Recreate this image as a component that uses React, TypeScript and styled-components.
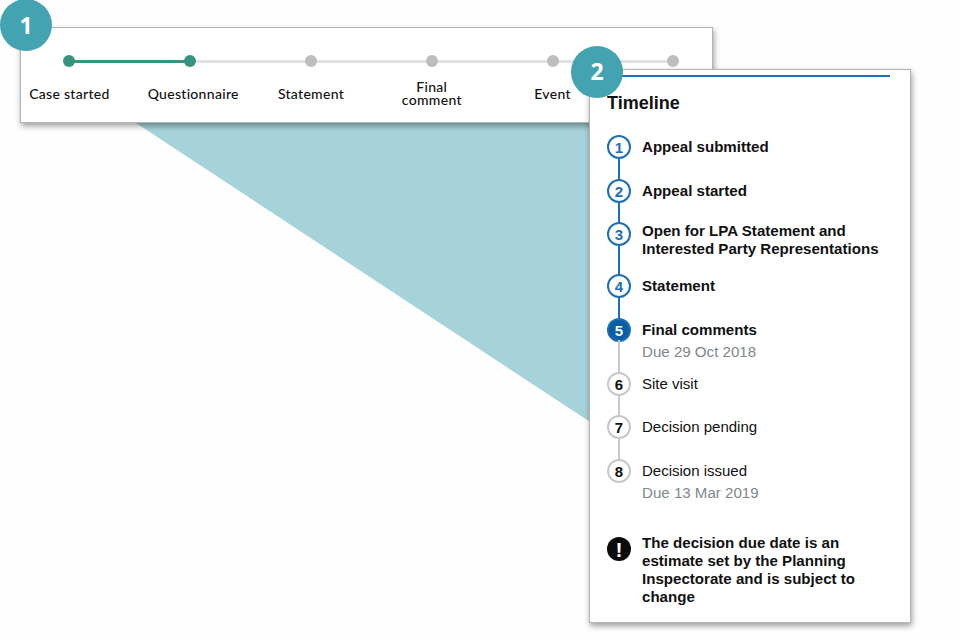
// App.tsx - annotated close-up of the appeal progress bar and timeline

import React from 'react';
import styled, { createGlobalStyle } from 'styled-components';

const GlobalStyle = createGlobalStyle`
  html, body {
    margin: 0;
    padding: 0;
    background: #fefefe;
  }
`;

const Canvas = styled.div`
  position: relative;
  width: 960px;
  height: 640px;
  overflow: hidden;
  background: #fefefe;
  font-family: "Liberation Sans", Arial, sans-serif;
  color: #111;
`;

const Wedge = styled.svg`
  position: absolute;
  left: 0;
  top: 0;
`;

const Card = styled.section`
  position: absolute;
  box-sizing: border-box;
  background: #fff;
  border: 1px solid #b4b4b4;
  box-shadow: 1px 3px 6px rgba(0, 0, 0, 0.38);
`;

const ProgressCard = styled(Card)`
  left: 20px;
  top: 27px;
  width: 693px;
  height: 96px;
`;

const TimelineCard = styled(Card)`
  left: 589px;
  top: 69px;
  width: 322px;
  height: 554px;
  padding: 5px 20px 0 17px;
`;

const Badge = styled.div<{ $left: number; $top: number }>`
  position: absolute;
  left: ${p => p.$left}px;
  top: ${p => p.$top}px;
  width: 52px;
  height: 52px;
  border-radius: 50%;
  background: #43a3b0;
  color: #fff;
  display: flex;
  align-items: center;
  justify-content: center;
  font-family: "Open Sans", sans-serif;
  font-weight: 700;
  font-size: 23px;
  line-height: 1;
`;

const Steps = styled.ol`
  list-style: none;
  margin: 0 0 0 -12px;
  padding: 0;
  display: grid;
  grid-template-columns: repeat(6, 120.8px);
`;

const Step = styled.li`
  display: flex;
  flex-direction: column;
  align-items: center;
  padding-top: 27px;
`;

const DotWrap = styled.div<{ $line?: string }>`
  position: relative;
  width: 100%;
  height: 13px;
  display: flex;
  justify-content: center;

  &::after {
    content: ${p => (p.$line ? '""' : 'none')};
    position: absolute;
    left: 50%;
    top: 5px;
    width: 100%;
    height: 3px;
    background: ${p => p.$line};
  }
`;

const Dot = styled.span<{ $done: boolean }>`
  position: relative;
  z-index: 1;
  width: 12px;
  height: 12px;
  border-radius: 50%;
  background: ${p => (p.$done ? '#35937f' : '#bdbdbd')};
`;

const StepLabel = styled.div<{ $shift?: number }>`
  height: 38px;
  margin-top: 6px;
  margin-left: ${p => (p.$shift ? p.$shift * 2 : 0)}px;
  display: flex;
  align-items: center;
  text-align: center;
  font-family: Lato, sans-serif;
  font-weight: 500;
  font-size: 14px;
  line-height: 13px;
  letter-spacing: 0.3px;
  color: #111;
`;

const TimelineHeader = styled.h2`
  margin: 0;
  padding: 16px 0 0;
  height: 42px;
  border-top: 2px solid #1d6fb5;
  font-size: 18px;
  line-height: 21px;
  font-weight: 700;
  box-sizing: content-box;
`;

const Rows = styled.ol`
  list-style: none;
  margin: 0;
  padding: 0;
`;

const Row = styled.li<{ $height: number; $line?: string }>`
  position: relative;
  display: flex;
  align-items: flex-start;
  gap: 11px;
  min-height: ${p => p.$height}px;

  &::after {
    content: ${p => (p.$line ? '""' : 'none')};
    position: absolute;
    left: 11px;
    top: 22px;
    width: 2px;
    height: ${p => p.$height - 20}px;
    background: ${p => p.$line};
  }
`;

const Marker = styled.span<{ $state: 'done' | 'current' | 'todo' }>`
  flex: none;
  box-sizing: border-box;
  width: 24px;
  height: 24px;
  border-radius: 50%;
  border: 2px solid ${p => (p.$state === 'todo' ? '#c6c8c9' : '#1d6fb5')};
  background: ${p => (p.$state === 'current' ? '#0b5ea6' : '#fff')};
  color: ${p => (p.$state === 'current' ? '#fff' : p.$state === 'done' ? '#1d6fb5' : '#111')};
  display: flex;
  align-items: center;
  justify-content: center;
  font-size: 15px;
  font-weight: 700;
  line-height: 1;
`;

const RowText = styled.div<{ $tight?: boolean }>`
  padding-top: ${p => (p.$tight ? 0 : 3)}px;
`;

const RowTitle = styled.div<{ $bold: boolean }>`
  font-size: ${p => (p.$bold ? 15.1 : 15)}px;
  line-height: 18px;
  font-weight: ${p => (p.$bold ? 700 : 400)};
  color: #111;
`;

const RowDue = styled.div`
  margin-top: 4px;
  font-size: 15.1px;
  line-height: 18px;
  color: #7e878b;
`;

const Notice = styled.div`
  display: flex;
  align-items: flex-start;
  gap: 11px;
  margin-top: 21px;
`;

const NoticeIcon = styled.span`
  flex: none;
  width: 24px;
  height: 24px;
  margin-top: 3px;
  border-radius: 50%;
  background: #0b0b0b;
  color: #fff;
  display: flex;
  align-items: center;
  justify-content: center;
  font-size: 21px;
  font-weight: 700;
  line-height: 1;
`;

const NoticeText = styled.p`
  margin: 0;
  font-size: 15.1px;
  line-height: 18px;
  font-weight: 700;
  color: #111;
`;

const GREEN = '#35937f';
const TRACK = '#e1e1e1';
const BLUE = '#1d6fb5';
const GREY = '#c6c8c9';

const progress = [
  { label: 'Case started', done: true, line: GREEN },
  { label: 'Questionnaire', done: true, line: TRACK, shift: 3 },
  { label: 'Statement', done: false, line: TRACK },
  { label: <>Final<br />comment</>, done: false, line: TRACK },
  { label: 'Event', done: false, line: TRACK },
  { label: '', done: false },
];

type RowData = {
  title: React.ReactNode;
  state: 'done' | 'current' | 'todo';
  height: number;
  line?: string;
  due?: string;
  tight?: boolean;
};

const rows: RowData[] = [
  { title: 'Appeal submitted', state: 'done', height: 44, line: BLUE },
  { title: 'Appeal started', state: 'done', height: 43, line: BLUE },
  {
    title: <>Open for LPA Statement and<br />Interested Party Representations</>,
    state: 'done',
    height: 52,
    line: BLUE,
    tight: true,
  },
  { title: 'Statement', state: 'done', height: 44, line: BLUE },
  { title: 'Final comments', state: 'current', height: 54, line: GREY, due: 'Due 29 Oct 2018' },
  { title: 'Site visit', state: 'todo', height: 43, line: GREY },
  { title: 'Decision pending', state: 'todo', height: 44, line: GREY },
  { title: 'Decision issued', state: 'todo', height: 54, due: 'Due 13 Mar 2019' },
];

const App: React.FC = () => (
  <Canvas>
    <GlobalStyle />
    <Wedge width="960" height="640" viewBox="0 0 960 640">
      <polygon points="134.5,122 592,122 592,423.3" fill="#a6d3d9" />
    </Wedge>

    <ProgressCard>
      <Steps>
        {progress.map((s, i) => (
          <Step key={i}>
            <DotWrap $line={s.line}>
              <Dot $done={s.done} />
            </DotWrap>
            <StepLabel $shift={s.shift}>{s.label}</StepLabel>
          </Step>
        ))}
      </Steps>
    </ProgressCard>

    <TimelineCard>
      <TimelineHeader>Timeline</TimelineHeader>
      <Rows>
        {rows.map((r, i) => (
          <Row key={i} $height={r.height} $line={r.line}>
            <Marker $state={r.state}>{i + 1}</Marker>
            <RowText $tight={r.tight}>
              <RowTitle $bold={r.state !== 'todo'}>{r.title}</RowTitle>
              {r.due && <RowDue>{r.due}</RowDue>}
            </RowText>
          </Row>
        ))}
      </Rows>
      <Notice>
        <NoticeIcon>!</NoticeIcon>
        <NoticeText>
          The decision due date is an estimate set by the Planning Inspectorate and is subject to change
        </NoticeText>
      </Notice>
    </TimelineCard>

    <Badge $left={0} $top={-1}>1</Badge>
    <Badge $left={571} $top={45.5}>2</Badge>
  </Canvas>
);

export default App;
